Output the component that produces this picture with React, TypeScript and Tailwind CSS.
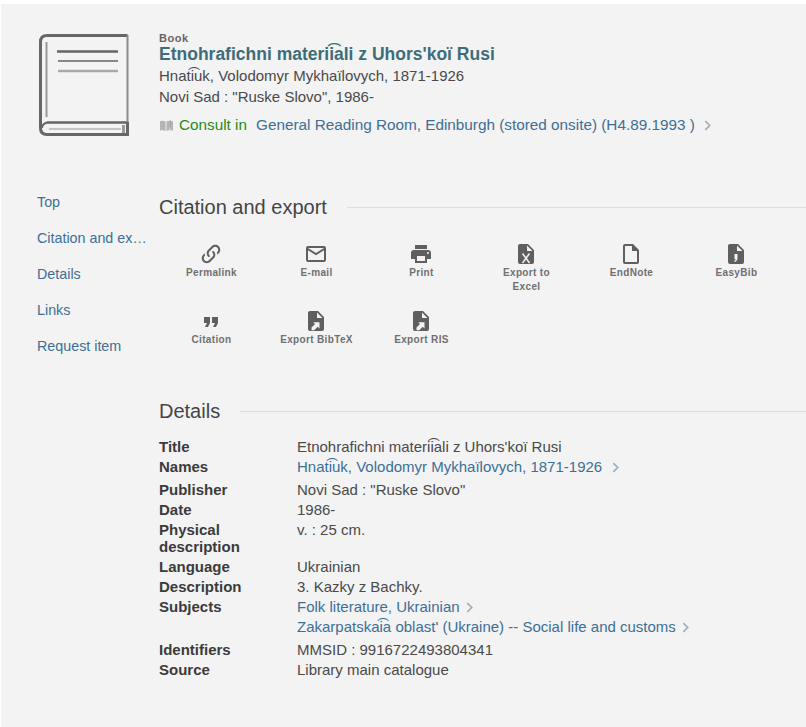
import React from "react";

const fileSolid = "M13,9V3.5L18.5,9M6,2C4.89,2 4,2.89 4,4V20A2,2 0 0,0 6,22H18A2,2 0 0,0 20,20V8L14,2H6Z";

const Icon = ({ children }: { children: React.ReactNode }) => (
  <svg viewBox="0 0 24 24" className="w-6 h-6 -ml-px fill-[#5f5f5f]">
    {children}
  </svg>
);

const FileExport = () => (
  <Icon>
    <path d={fileSolid} />
    <path d="M7.500 18.500l3.500-3.500-1.800-1.800h6.300v6.300l-1.800-1.800-3.500 3.500H7.500z" fill="#f3f3f3" />
  </Icon>
);

const actions = [
  {
    label: "Permalink",
    icon: (
      <Icon>
        <path d="M10.59,13.41C11,13.8 11,14.44 10.59,14.83C10.2,15.22 9.56,15.22 9.17,14.83C7.22,12.88 7.22,9.71 9.17,7.76V7.76L12.71,4.22C14.66,2.27 17.83,2.27 19.78,4.22C21.73,6.17 21.73,9.34 19.78,11.29L18.29,12.78C18.3,11.96 18.17,11.14 17.89,10.36L18.36,9.88C19.54,8.71 19.54,6.81 18.36,5.64C17.19,4.46 15.29,4.46 14.12,5.64L10.59,9.17C9.41,10.34 9.41,12.24 10.59,13.41M13.41,9.17C13.8,8.78 14.44,8.78 14.83,9.17C16.78,11.12 16.78,14.29 14.83,16.24V16.24L11.29,19.78C9.34,21.73 6.17,21.73 4.22,19.78C2.27,17.83 2.27,14.66 4.22,12.71L5.71,11.22C5.7,12.04 5.83,12.86 6.11,13.65L5.64,14.12C4.46,15.29 4.46,17.19 5.64,18.36C6.81,19.54 8.71,19.54 9.88,18.36L13.41,14.83C14.59,13.66 14.59,11.76 13.41,10.59C13,10.2 13,9.56 13.41,9.17Z" />
      </Icon>
    ),
  },
  {
    label: "E-mail",
    icon: (
      <Icon>
        <path d="M4,4H20A2,2 0 0,1 22,6V18A2,2 0 0,1 20,20H4C2.89,20 2,19.1 2,18V6C2,4.89 2.89,4 4,4M12,11L20,6H4L12,11M4,18H20V8.37L12,13.36L4,8.37V18Z" />
      </Icon>
    ),
  },
  {
    label: "Print",
    icon: (
      <Icon>
        <path d="M18,3H6V7H18M19,12A1,1 0 0,1 18,11A1,1 0 0,1 19,10A1,1 0 0,1 20,11A1,1 0 0,1 19,12M16,19H8V14H16M19,8H5A3,3 0 0,0 2,11V17H6V21H18V17H22V11A3,3 0 0,0 19,8Z" />
      </Icon>
    ),
  },
  {
    label: "Export to Excel",
    icon: (
      <Icon>
        <path d={fileSolid} />
        <path d="M8.500 11.500l7 9.500M15.500 11.500l-7 9.500" stroke="#f3f3f3" strokeWidth="1.500" fill="none" />
      </Icon>
    ),
  },
  {
    label: "EndNote",
    icon: (
      <Icon>
        <path d="M14,2H6A2,2 0 0,0 4,4V20A2,2 0 0,0 6,22H18A2,2 0 0,0 20,20V8L14,2M18,20H6V4H13V9H18V20Z" />
      </Icon>
    ),
  },
  {
    label: "EasyBib",
    icon: (
      <Icon>
        <path d={fileSolid} />
        <path d="M10.500 12h3v4c0 2-1 3.500-3 4v-1.500c.8-.4 1.100-1 1.200-1.500h-1.200z" fill="#f3f3f3" />
      </Icon>
    ),
  },
  {
    label: "Citation",
    icon: (
      <Icon>
        <path d="M14,18H17L19,14V8H13V14H16M6,18H9L11,14V8H5V14H8L6,18Z" />
      </Icon>
    ),
  },
  { label: "Export BibTeX", icon: <FileExport /> },
  { label: "Export RIS", icon: <FileExport /> },
];

const Chevron = ({ className = "ml-[6px]" }: { className?: string }) => (
  <svg viewBox="0 0 8 12" className={`inline-block w-[7px] h-[11px] align-[-1px] fill-none stroke-[#9fb0be] stroke-[2] ${className}`}>
    <path d="M1.500 1l5 5-5 5" />
  </svg>
);

const BookCover = () => (
  <svg viewBox="0 0 90 102" className="w-[90px] h-[102px] shrink-0 fill-none">
    <path d="M88.500 1.500H8Q1.500 1.500 1.500 8V94Q1.500 100.500 8 100.500H88.500" stroke="#666" strokeWidth="3" />
    <path d="M8 88.500H89.500" stroke="#666" strokeWidth="2.500" />
    <path d="M8 88.500Q3 90 3 94" stroke="#666" strokeWidth="2" />
    <path d="M88.500 1V89" stroke="#8a8a8a" strokeWidth="2" />
    <path d="M88.500 88V102" stroke="#666" strokeWidth="3" />
    <path d="M10 95H82" stroke="#c4c4c4" strokeWidth="2" />
    <path d="M84.500 91V99" stroke="#999" strokeWidth="3" />
    <path d="M7.500 8V83" stroke="#999" strokeWidth="2" />
    <path d="M18 17.500H79" stroke="#666" strokeWidth="2.600" />
    <path d="M19 27H79" stroke="#888" strokeWidth="2" />
    <path d="M19 37H79" stroke="#aaa" strokeWidth="2.400" />
  </svg>
);

const Section = ({ title, children }: { title: string; children: React.ReactNode }) => (
  <div>
    <div className="flex items-center gap-5 h-[46px]">
      <h2 className="text-[20px] text-[#454545]">{title}</h2>
      <div className="flex-1 h-px bg-[#dcdcdc]"></div>
    </div>
    {children}
  </div>
);

const Row = ({ label, children, className = "" }: { label: string; children: React.ReactNode; className?: string }) => (
  <div className={`flex ${className}`}>
    <div className="w-[138px] shrink-0 pr-8 font-bold text-[#3b3b3b] leading-[17px] pt-px pb-[2px]">{label}</div>
    <div className="leading-[20px]">{children}</div>
  </div>
);

const App = () => {
  return (
    <div className="w-[806px] h-[727px] overflow-hidden bg-white pt-1 pl-px font-['Liberation_Sans',Arial,sans-serif] text-[15px] text-[#4a4a4a]">
      <div className="h-full bg-[#f3f3f3]">
        {/* Record header */}
        <div className="flex gap-[30px] pl-[38px] pt-[30px] h-[180px]">
          <BookCover />
          <div className="-mt-[1px]">
            <div className="text-[11px] leading-[10px] font-bold tracking-[0.5px] text-[#666]">Book</div>
            <h1 className="text-[17.5px] leading-[20px] mt-[1px] font-bold text-[#3e6d7a]">Etnohrafichni materii͡ali z Uhors'koï Rusi</h1>
            <div className="leading-[20px] mt-[2px]">Hnati͡uk, Volodomyr Mykhaïlovych, 1871-1926</div>
            <div className="leading-[20px] mt-[1px]">Novi Sad : "Ruske Slovo", 1986-</div>
            <div className="flex items-center mt-[8px] leading-[20px] text-[15.3px]">
              <svg viewBox="0 0 16 14" className="w-[15px] h-[13px] mr-[5px] fill-[#b5b5b5]">
                <path d="M1 2.500c2-.8 4-.8 6 .3V13c-2-1-4-1-6-.3z" />
                <path d="M8 2.800c.9-.6 2.100-.9 3.500-1v10l-3.500 1.200zM12.500 1.800l2.500.7V12.700c-1-.4-2-.5-3-.5v-1z" />
                <path d="M12 1.500V9" stroke="#8f8f8f" strokeWidth="1" />
              </svg>
              <span className="text-[#2c8a15]">Consult in</span>
              <span className="ml-[9px] text-[#3d6f96]">General Reading Room, Edinburgh (stored onsite) (H4.89.1993 )</span>
              <Chevron className="ml-[9px]" />
            </div>
          </div>
        </div>

        <div className="flex">
          {/* Side nav */}
          <nav className="w-[158px] shrink-0 pl-9 pr-[12px] text-[14.3px] text-[#3d6f96]">
            {["Top", "Citation and export", "Details", "Links", "Request item"].map((item) => (
              <div key={item} className="h-9 leading-9 truncate">
                {item}
              </div>
            ))}
          </nav>

          <div className="flex-1">
            <Section title="Citation and export">
              <div className="grid grid-cols-6 w-[630px] mt-[12px]">
                {actions.map((a) => (
                  <div key={a.label} className="flex flex-col items-center h-[67px] px-[15px] text-center">
                    {a.icon}
                    <div className="text-[10px] leading-[14px] font-bold tracking-[0.35px] text-[#707070]">{a.label}</div>
                  </div>
                ))}
              </div>
            </Section>

            <div className="mt-[12px]">
              <Section title="Details">
                <div className="mt-[3px]">
                  <Row label="Title">Etnohrafichni materii͡ali z Uhors'koï Rusi</Row>
                  <Row label="Names" className="mb-[3px]">
                    <span className="text-[#3d6f96]">Hnati͡uk, Volodomyr Mykhaïlovych, 1871-1926</span>
                    <Chevron className="ml-[10px]" />
                  </Row>
                  <Row label="Publisher">Novi Sad : "Ruske Slovo"</Row>
                  <Row label="Date">1986-</Row>
                  <Row label="Physical description">v. : 25 cm.</Row>
                  <Row label="Language">Ukrainian</Row>
                  <Row label="Description">3. Kazky z Bachky.</Row>
                  <Row label="Subjects" className="mb-[3px]">
                    <div className="text-[#3d6f96]">
                      Folk literature, Ukrainian
                      <Chevron />
                    </div>
                    <div className="text-[#3d6f96]">
                      Zakarpatskai͡a oblast' (Ukraine) -- Social life and customs
                      <Chevron />
                    </div>
                  </Row>
                  <Row label="Identifiers">MMSID : 9916722493804341</Row>
                  <Row label="Source">Library main catalogue</Row>
                </div>
              </Section>
            </div>
          </div>
        </div>
      </div>
    </div>
  );
};

export default App;
